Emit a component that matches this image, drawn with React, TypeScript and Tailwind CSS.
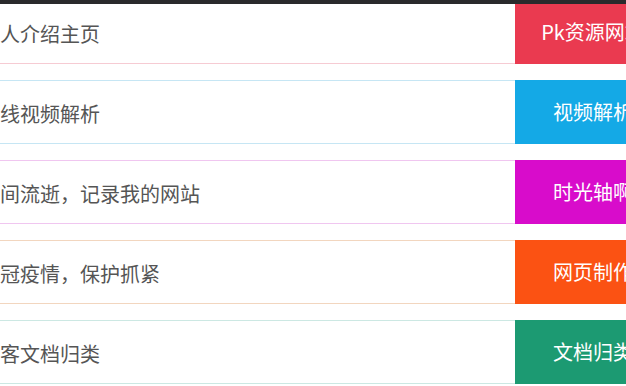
const rows = [
  { text: '个人介绍主页', tag: 'Pk资源网站', box: 'bg-[#ea3a50]', line: 'border-[#f6cbd3]' },
  { text: '在线视频解析', tag: '视频解析', box: 'bg-[#14a9e6]', line: 'border-[#c6e6f4]' },
  { text: '时间流逝，记录我的网站', tag: '时光轴啊', box: 'bg-[#d80ccb]', line: 'border-[#f0c6f0]' },
  { text: '新冠疫情，保护抓紧', tag: '网页制作', box: 'bg-[#fb5213]', line: 'border-[#f2d6bf]' },
  { text: '博客文档归类', tag: '文档归类', box: 'bg-[#1c9a72]', line: 'border-[#cce8e3]' },
];

export default function App() {
  return (
    <div
      className="relative w-full h-[386px] overflow-hidden bg-white"
      style={{ fontFamily: '"Noto Sans CJK SC", "Noto Sans", sans-serif' }}
    >
      {/* header edge that sits over the first row */}
      <div className="absolute top-0 left-0 right-0 h-1 bg-[#2a2a2c] z-10" />
      <div className="flex flex-col gap-4 w-[691px] -ml-5">
        {rows.map((r) => (
          <div key={r.tag} className="flex h-16">
            <div className={`flex-1 flex items-center pt-[3px] border-y ${r.line} text-[20px] text-[#555]`}>
              {r.text}
            </div>
            <div className={`w-[156px] shrink-0 flex items-center justify-center text-[20px] text-white ${r.box}`}>
              {r.tag}
            </div>
          </div>
        ))}
      </div>
    </div>
  );
}
